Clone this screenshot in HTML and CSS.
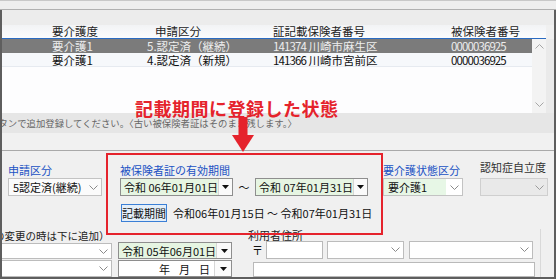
FILE: index.html
```html
<!DOCTYPE html>
<html lang="ja">
<head>
<meta charset="utf-8">
<title>被保険者証</title>
<link rel="stylesheet" href="styles.css">
</head>
<body>
<div class="topstrip"></div>
<div class="frame">
  <div class="list-gap"></div>
  <div class="list-head">
    <span class="h1">要介護度</span>
    <span class="h2">申請区分</span>
    <span class="h3">証記載保険者番号</span>
    <span class="h4">被保険者番号</span>
  </div>
  <div class="list-body">
    <div class="rows">
      <div class="row sel">
        <span class="c1">要介護1</span>
        <span class="c2">5.認定済（継続）</span>
        <span class="c3"><span class="num">141374</span> 川崎市麻生区</span>
        <span class="c4 num">0000036925</span>
      </div>
      <div class="row">
        <span class="c1">要介護1</span>
        <span class="c2">4.認定済（新規）</span>
        <span class="c3"><span class="num">141366</span> 川崎市宮前区</span>
        <span class="c4 num">0000036925</span>
      </div>
    </div>
    <div class="vscroll">
      <svg class="sarrow" width="9" height="5" viewBox="0 0 9 5"><polyline points="0.5,4.5 4.5,0.5 8.5,4.5" fill="none" stroke="#a6a6a6" stroke-width="1"/></svg>
      <svg class="sarrow" width="9" height="5" viewBox="0 0 9 5"><polyline points="0.5,0.5 4.5,4.5 8.5,0.5" fill="none" stroke="#a6a6a6" stroke-width="1"/></svg>
    </div>
    <div class="list-side"></div>
  </div>
  <div class="note"><span class="note-text">ボタンで追加登録してください。〈古い被保険者証はそのまま残します。〉</span></div>
  <div class="band"></div>
  <div class="form">
    <div class="form-top">
      <div class="col col-shinsei">
        <div class="label blue">申請区分</div>
        <div class="select">
          <span class="select-text">5認定済(継続)</span>
          <span class="chev"><svg width="9" height="5" viewBox="0 0 9 5"><polyline points="0.5,0.5 4.5,4.5 8.5,0.5" fill="none" stroke="#8a8a8a"/></svg></span>
        </div>
      </div>
      <div class="col col-kikan">
        <div class="label blue">被保険者証の有効期間</div>
        <div class="date-row">
          <div class="date w1">
            <span class="date-text">令和 06年01月01日</span>
            <span class="date-btn"><svg width="7" height="4" viewBox="0 0 7 4"><polygon points="0,0 7,0 3.5,4" fill="#111"/></svg></span>
          </div>
          <span class="tilde">～</span>
          <div class="date w1">
            <span class="date-text">令和 07年01月31日</span>
            <span class="date-btn"><svg width="7" height="4" viewBox="0 0 7 4"><polygon points="0,0 7,0 3.5,4" fill="#111"/></svg></span>
          </div>
        </div>
        <div class="btn-row">
          <span class="btn">記載期間</span>
          <span class="period">令和06年01月15日 ～ 令和07年01月31日</span>
        </div>
      </div>
      <div class="col col-kaigo">
        <div class="label blue">要介護状態区分</div>
        <div class="select green">
          <span class="select-text">要介護1</span>
          <span class="chev"><svg width="9" height="5" viewBox="0 0 9 5"><polyline points="0.5,0.5 4.5,4.5 8.5,0.5" fill="none" stroke="#8a8a8a"/></svg></span>
        </div>
      </div>
      <div class="col col-ninchi">
        <div class="label dark">認知症自立度</div>
        <div class="select disabled">
          <span class="select-text"></span>
          <span class="chev"><svg width="9" height="5" viewBox="0 0 9 5"><polyline points="0.5,0.5 4.5,4.5 8.5,0.5" fill="none" stroke="#9a9a9a"/></svg></span>
        </div>
      </div>
    </div>
    <div class="form-bottom">
      <div class="col col-left">
        <div class="small-label"><span class="clip">の変更の時は下に追加）</span></div>
        <div class="select plain">
          <span class="select-text"></span>
          <span class="chev"><svg width="9" height="5" viewBox="0 0 9 5"><polyline points="0.5,0.5 4.5,4.5 8.5,0.5" fill="none" stroke="#8a8a8a"/></svg></span>
        </div>
        <div class="select plain second">
          <span class="select-text"></span>
          <span class="chev"><svg width="9" height="5" viewBox="0 0 9 5"><polyline points="0.5,0.5 4.5,4.5 8.5,0.5" fill="none" stroke="#8a8a8a"/></svg></span>
        </div>
      </div>
      <div class="col col-date">
        <div class="spacer"></div>
        <div class="date">
          <span class="date-text">令和 05年06月01日</span>
          <span class="date-btn"><svg width="7" height="4" viewBox="0 0 7 4"><polygon points="0,0 7,0 3.5,4" fill="#111"/></svg></span>
        </div>
        <div class="date second plainbg">
          <span class="date-text ymd"><span>年</span><span>月</span><span>日</span></span>
          <span class="date-btn"><svg width="7" height="4" viewBox="0 0 7 4"><polygon points="0,0 7,0 3.5,4" fill="#111"/></svg></span>
        </div>
      </div>
      <div class="col col-addr">
        <div class="small-label addr-label">利用者住所</div>
        <div class="addr-row">
          <span class="zip-mark">〒</span>
          <span class="input zip"></span>
          <div class="select plain a1">
            <span class="select-text"></span>
            <span class="chev"><svg width="9" height="5" viewBox="0 0 9 5"><polyline points="0.5,0.5 4.5,4.5 8.5,0.5" fill="none" stroke="#8a8a8a"/></svg></span>
          </div>
          <div class="select plain a2">
            <span class="select-text"></span>
            <span class="chev"><svg width="9" height="5" viewBox="0 0 9 5"><polyline points="0.5,0.5 4.5,4.5 8.5,0.5" fill="none" stroke="#8a8a8a"/></svg></span>
          </div>
        </div>
        <span class="input address"></span>
      </div>
    </div>
  </div>
</div>

<div class="annot-title">記載期間に登録した状態</div>
<svg class="annot-arrow" width="22" height="35" viewBox="0 0 22 35"><rect x="6.5" y="0" width="9" height="19" fill="#e5232c"/><polygon points="0,18 22,18 11,35" fill="#e5232c"/></svg>
<div class="annot-box"></div>
</body>
</html>
```
FILE: styles.css
```css
* { box-sizing: border-box; margin: 0; padding: 0; }
html, body { width: 556px; height: 279px; overflow: hidden; }
body {
  position: relative;
  font-family: "Noto Sans CJK JP", "Noto Sans", sans-serif;
  font-size: 11px;
  color: #111;
  background: #eeeeee;
}
.topstrip { height: 10px; background: #eeeeee; border-top: 1px solid #c8c8c8; border-bottom: 1px solid #b0b0b0; }
.frame {
  height: 269px;
  border: 2px solid #5e5e5e;
  border-top: 0;
  background: #f0f0f0;
  display: flex;
  flex-direction: column;
  overflow: hidden;
}
.list-gap { height: 15px; background: #ececec; flex: none; }
.list-head {
  flex: none;
  height: 14px;
  width: 544px;
  display: flex;
  background: linear-gradient(#f2f3f5, #fbfcfd);
  border-bottom: 1px solid #2a6bc2;
  line-height: 13px;
  font-size: 11.5px;
  color: #222;
  white-space: nowrap;
}
.h1 { margin-left: 50px; width: 103px; }
.h2 { width: 118px; }
.h3 { width: 178px; }
.list-body { flex: none; height: 74px; display: flex; }
.rows { width: 530px; background: #fdfdfe; }
.row {
  height: 14px;
  display: flex;
  line-height: 14px;
  font-size: 11.5px;
  white-space: nowrap;
  background: #f6f8fb;
  border-bottom: 1px solid #e6eaf0;
}
.row.sel { background: #7b7b7b; color: #ededed; border-bottom: 0; }
.c1 { margin-left: 50px; width: 95px; }
.c2 { width: 126px; }
.c3 { width: 178px; }
.num { letter-spacing: -0.9px; }
.vscroll {
  width: 14px;
  background: #f3f3f3;
  display: flex;
  flex-direction: column;
  justify-content: space-between;
  align-items: center;
  padding: 5px 0 6px;
}
.sarrow { display: block; }
.list-side { flex: 1; background: #eaeaea; }

.note {
  flex: none;
  height: 20px;
  background: #e6e6e6;
  overflow: hidden;
  white-space: nowrap;
  line-height: 20px;
  font-size: 9.4px;
  color: #676767;
}
.note-text { display: inline-block; margin-left: -13px; }
.band { flex: none; height: 18px; background: #f1f1f1; border-bottom: 1px solid #a9a9a9; }

.form { flex: 1; overflow: hidden; display: flex; flex-direction: column; }
.form-top { flex: none; height: 78px; display: flex; }
.col { flex: none; display: flex; flex-direction: column; }
.col-shinsei { margin-left: 6px; width: 94px; }
.col-kikan { margin-left: 18px; width: 248px; }
.col-kaigo { margin-left: 15px; width: 80px; }
.col-ninchi { margin-left: 17px; width: 68px; }

.label { margin-top: 12px; height: 14px; line-height: 14px; white-space: nowrap; margin-bottom: 1px; }
.blue { color: #2152c4; }
.dark { color: #333; margin-top: 9px; margin-bottom: 4px; }

.select {
  height: 18px;
  display: flex;
  border: 1px solid #c3c3c3;
  background: #fbfbfb;
  line-height: 16px;
  white-space: nowrap;
}
.select-text { flex: 1; padding-left: 4px; overflow: hidden; }
.chev { width: 16px; display: flex; align-items: center; justify-content: center; }
.chev svg { display: block; }
.select.green { background: #fff; }
.select.green .select-text { background: #e7f7e6; }
.select.disabled { background: #e9e9e9; border-color: #cfcfcf; }
.select.plain { background: #fff; border-color: #bcbcbc; }

.date-row { display: flex; height: 18px; }
.date {
  height: 18px;
  display: flex;
  border: 1px solid #8e8e8e;
  background: #fff;
  line-height: 16px;
  white-space: nowrap;
}
.date.w1 { width: 113px; }
.date-text { flex: 1; background: #e6f5e2; padding-left: 3px; }
.date-btn {
  width: 17px;
  display: flex;
  align-items: center;
  justify-content: center;
  background: #fafafa;
  border-left: 1px solid #d6d6d6;
}
.date-btn svg { display: block; }
.tilde { width: 22px; text-align: center; line-height: 18px; }

.btn-row { display: flex; margin-top: 8px; height: 18px; align-items: center; white-space: nowrap; }
.btn {
  width: 53px;
  height: 18px;
  margin-left: 1px;
  border: 1px solid #3b7fd6;
  background: #e3eef9;
  text-align: center;
  line-height: 16px;
}
.period { margin-left: 6px; line-height: 18px; }

.form-bottom { flex: none; display: flex; height: 48px; }
.col-left { width: 110px; }
.small-label { height: 15px; line-height: 15px; font-size: 10.5px; white-space: nowrap; overflow: hidden; color: #222; margin-top: -1px; }
.clip { display: inline-block; margin-left: -8px; }
.col-left .select { border-left: 0; height: 17px; }
.second { margin-top: 1px; }
.col-date { margin-left: 6px; width: 114px; }
.spacer { height: 14px; }
.col-date .date { height: 17px; }
.plainbg .date-text { background: #fff; }
.ymd { display: flex; justify-content: flex-end; padding-right: 4px; gap: 9px; }

.col-addr {
  margin-left: 13px;
  width: 296px;
  border-right: 1px solid #d9d9d9;
}
.addr-label { padding-left: 3px; font-size: 11px; }
.addr-row { display: flex; height: 18px; align-items: center; }
.zip-mark { width: 21px; padding-left: 7px; line-height: 18px; }
.input { display: block; height: 18px; border: 1px solid #b9b9b9; background: #fff; }
.zip { width: 57px; }
.a1 { width: 77px; margin-left: 4px; }
.a2 { width: 124px; margin-left: 5px; }
.address { width: 282px; margin-left: 8px; margin-top: 3px; }

.annot-title {
  position: absolute;
  left: 135px;
  top: 98px;
  font-size: 18px;
  font-weight: bold;
  letter-spacing: 0.5px;
  line-height: 20px;
  color: #e5232c;
  white-space: nowrap;
}
.annot-arrow { position: absolute; left: 232px; top: 117px; display: block; }
.annot-box {
  position: absolute;
  left: 106px;
  top: 153px;
  width: 277px;
  height: 82px;
  border: 2px solid #e5232c;
}
```
